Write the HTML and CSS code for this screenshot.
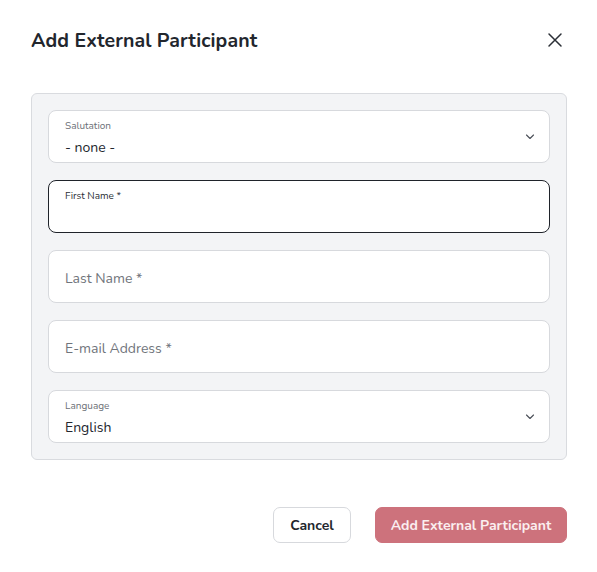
FILE: index.html
```html
<!DOCTYPE html>
<html>
<head>
<meta charset="utf-8">
<link rel="stylesheet" href="styles.css">
</head>
<body>
<div class="dialog">
  <div class="header">
    <h1 class="title">Add External Participant</h1>
    <button class="close" aria-label="Close">
      <svg width="16" height="16" viewBox="0 0 16 16"><path d="M2 2L14 14M14 2L2 14" stroke="#2b2f36" stroke-width="1.5" stroke-linecap="round"/></svg>
    </button>
  </div>
  <div class="panel">
    <div class="field select">
      <div class="label">Salutation</div>
      <div class="value">- none -</div>
      <svg class="chev" width="10" height="6" viewBox="0 0 10 6"><path d="M1.5 1L5 4.5L8.5 1" fill="none" stroke="#4b5058" stroke-width="1.1" stroke-linecap="round" stroke-linejoin="round"/></svg>
    </div>
    <div class="field focused">
      <div class="label dark">First Name *</div>
    </div>
    <div class="field empty">
      <div class="placeholder">Last Name *</div>
    </div>
    <div class="field empty">
      <div class="placeholder">E-mail Address *</div>
    </div>
    <div class="field select">
      <div class="label">Language</div>
      <div class="value">English</div>
      <svg class="chev" width="10" height="6" viewBox="0 0 10 6"><path d="M1.5 1L5 4.5L8.5 1" fill="none" stroke="#4b5058" stroke-width="1.1" stroke-linecap="round" stroke-linejoin="round"/></svg>
    </div>
  </div>
  <div class="footer">
    <button class="btn cancel">Cancel</button>
    <button class="btn primary">Add External Participant</button>
  </div>
</div>
</body>
</html>
```
FILE: styles.css
```css
* { box-sizing: border-box; }
html, body { margin: 0; padding: 0; background: #fff; }
body { font-family: "Nunito", Lato, "Noto Sans", sans-serif; color: #22262d; }
.dialog { width: 597px; height: 572px; padding: 0 30px 0 31px; }
.header { display: flex; justify-content: space-between; align-items: center; height: 80px; }
.title { margin: 0; font-size: 19.5px; font-weight: 700; color: #22262d; letter-spacing: 0.1px; }
.close { border: 0; background: none; padding: 0; width: 16px; height: 16px; margin-right: 4px; display: flex; }
.panel { margin-top: 13px; border: 1px solid #d9dbdf; border-radius: 6px; background: #f3f4f6; padding: 16px; display: flex; flex-direction: column; gap: 17px; }
.field { position: relative; height: 53px; background: #fff; border: 1px solid #d7d9dd; border-radius: 8px; padding: 9px 16px 0 16px; }
.field.focused { border-color: #1f232a; }
.label { font-size: 10px; color: #6b6f76; line-height: 12px; }
.label.dark { color: #2a2e35; }
.value { font-size: 14px; color: #23272e; margin-top: 7px; line-height: 18px; }
.placeholder { font-size: 14px; color: #70747b; line-height: 18px; margin-top: 10px; }
.chev { position: absolute; right: 14px; top: 23px; }
.footer { display: flex; justify-content: flex-end; gap: 24px; margin-top: 47px; }
.btn { height: 36px; border-radius: 7px; font-family: inherit; font-size: 14px; font-weight: 700; padding: 0; white-space: nowrap; text-align: center; }
.cancel { width: 78px; background: #fff; border: 1px solid #d7d9dd; color: #22262d; }
.primary { width: 192px; background: #cd727c; border: 1px solid #cd727c; color: #fbeff0; }
```
